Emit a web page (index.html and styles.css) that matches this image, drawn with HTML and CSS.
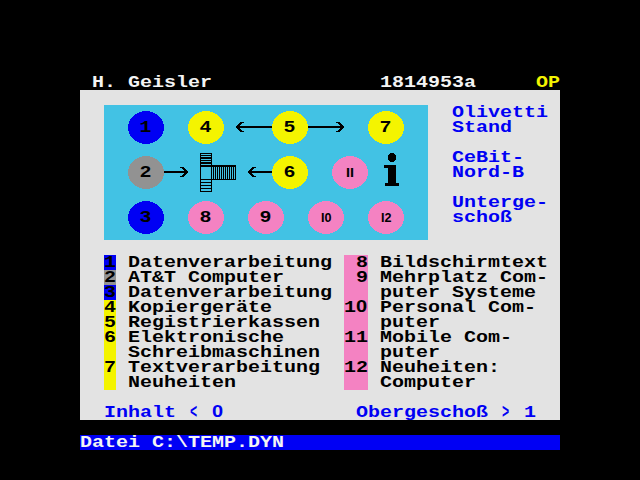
FILE: index.html
```
<!DOCTYPE html>
<html lang="de">
<head>
<meta charset="utf-8">
<title>Olivetti Stand</title>
<link rel="stylesheet" href="styles.css">
</head>
<body>
<div class="screen">
  <header class="top"><pre class="t">H. Geisler</pre><pre class="t code">1814953a</pre><pre class="t op">OP</pre></header>
  <main class="page">
    <section class="upper">
      <svg class="map" width="324" height="135" viewBox="104 105 324 135">
        <g shape-rendering="crispEdges">
          <g fill="#0000f4"><ellipse cx="146" cy="127.5" rx="18" ry="16.5"/><ellipse cx="146" cy="217.5" rx="18" ry="16.5"/></g>
          <ellipse cx="146" cy="172.5" rx="18" ry="16.5" fill="#929292"/>
          <g fill="#f4f400"><ellipse cx="206" cy="127.5" rx="18" ry="16.5"/><ellipse cx="290" cy="127.5" rx="18" ry="16.5"/><ellipse cx="386" cy="127.5" rx="18" ry="16.5"/><ellipse cx="290" cy="172.5" rx="18" ry="16.5"/></g>
          <g fill="#f482c2"><ellipse cx="350" cy="172.5" rx="18" ry="16.5"/><ellipse cx="206" cy="217.5" rx="18" ry="16.5"/><ellipse cx="266" cy="217.5" rx="18" ry="16.5"/><ellipse cx="326" cy="217.5" rx="18" ry="16.5"/><ellipse cx="386" cy="217.5" rx="18" ry="16.5"/></g>
          <path d="M237 126h35v2h-35zM308 126h35v2h-35zM164 171h23v2h-23zM249 171h23v2h-23z"/>
          <g fill="none" stroke="#000" stroke-width="1.8">
            <path d="M244 122.500H241.500L237 127L241.500 131.500H244M336 122.500H338.500L343 127L338.500 131.500H336M180 167.500H182.500L187 172L182.500 176.500H180M256 167.500H253.500L249 172L253.500 176.500H256"/>
          </g>
          <path d="M200 153h12v39h-12zM211 165h25v15h-25z"/>
          <g fill="#42c2e4">
            <path d="M201 154h10v1h-10zM201 156h10v1h-10zM201 159h10v1h-10zM201 161h10v1h-10zM201 164h10v1h-10zM201 167h10v12h-10zM201 180h10v2h-10zM201 183h10v2h-10zM201 186h10v2h-10zM201 189h10v2h-10z"/>
            <path d="M212 167h1v12h-1zM214 167h1v12h-1zM216 167h1v12h-1zM218 167h1v12h-1zM220 167h1v12h-1zM222 167h1v12h-1zM224 167h1v12h-1zM226 167h1v12h-1zM228 167h1v12h-1zM230 167h1v12h-1zM232 167h1v12h-1zM234 167h1v12h-1z"/>
          </g>
          <ellipse cx="392" cy="157.500" rx="4" ry="4.500"/>
          <path d="M384 165h12v18h3v3h-14v-3h3v-15h-4z"/>
        </g>
        <g class="num">
          <text transform="translate(139.500 132) scale(1.176 1)">1</text>
          <text transform="translate(199.500 132) scale(1.176 1)">4</text>
          <text transform="translate(283.500 132) scale(1.176 1)">5</text>
          <text transform="translate(379.500 132) scale(1.176 1)">7</text>
          <text transform="translate(139.500 177) scale(1.176 1)">2</text>
          <text transform="translate(283.500 177) scale(1.176 1)">6</text>
          <text transform="translate(139.500 222) scale(1.176 1)">3</text>
          <text transform="translate(199.500 222) scale(1.176 1)">8</text>
          <text transform="translate(259.500 222) scale(1.176 1)">9</text>
        </g>
        <g class="small">
          <text x="346" y="177" textLength="8" lengthAdjust="spacingAndGlyphs">II</text>
          <text x="321" y="222" textLength="10.500" lengthAdjust="spacingAndGlyphs">I0</text>
          <text x="381" y="222" textLength="10.500" lengthAdjust="spacingAndGlyphs">I2</text>
        </g>
      </svg>
      <pre class="t blue side">Olivetti
Stand

CeBit-
Nord-B

Unterge-
schoß</pre>
    </section>
    <section class="legend">
      <div class="keys left"><pre class="t">1
2
3
4
5
6

7
</pre></div>
      <pre class="t names">Datenverarbeitung
AT&amp;T Computer
Datenverarbeitung
Kopiergeräte
Registrierkassen
Elektronische
Schreibmaschinen
Textverarbeitung
Neuheiten</pre>
      <div class="keys right"><pre class="t"> 8
 9

1<span class="z">0</span>

11

12
</pre></div>
      <pre class="t">Bildschirmtext
Mehrplatz Com-
puter Systeme
Personal Com-
puter
Mobile Com-
puter
Neuheiten:
Computer</pre>
    </section>
    <nav class="links"><pre class="t blue">Inhalt <span class="angle">&lt;</span> <span class="z">0</span></pre><pre class="t blue over">Obergeschoß <span class="angle">&gt;</span> 1</pre></nav>
  </main>
  <footer class="file"><pre class="t">Datei C:\TEMP.DYN</pre></footer>
</div>
</body>
</html>
```
FILE: styles.css
```
body { margin: 0; background: #000; }
.screen { width: 480px; height: 405px; padding: 75px 80px 0; }
.t {
  width: max-content;
  margin: 0;
  font: bold 17px/15px "Liberation Mono", monospace;
  transform: scaleX(1.1763);
  transform-origin: 0 0;
}
.z {
  letter-spacing: 0.75px;
  line-height: 0;
  font-family: "Liberation Sans", sans-serif;
  font-size: 17px;
}
.angle {
  display: inline-block;
  line-height: 15px;
  height: 15px;
  vertical-align: top;
  transform: scale(0.6, 1.2);
}
.top {
  display: grid;
  grid-template-columns: 288px 156px 24px;
  height: 15px;
  padding-left: 12px;
  color: #f4f4f4;
}
.op { color: #f4f400; }
.page { height: 330px; background: #e3e3e3; color: #000; }
.upper {
  display: grid;
  grid-template-columns: 324px 96px;
  column-gap: 24px;
  padding: 15px 0 0 24px;
}
.map { display: block; background: #42c2e4; }
.blue { color: #0000f4; }
.legend {
  display: grid;
  grid-template-columns: 12px 204px 24px 168px;
  column-gap: 12px;
  height: 135px;
  padding: 15px 0 0 24px;
}
.keys { height: 135px; }
.left {
  background: linear-gradient(#0000f4 15px, #929292 15px 30px, #0000f4 30px 45px, #f4f400 45px);
}
.right { background: #f482c2; }
.links {
  display: grid;
  grid-template-columns: 252px 180px;
  height: 15px;
  padding: 15px 0 0 24px;
}
.file {
  height: 15px;
  margin-top: 15px;
  background: #0000f4;
  color: #f4f4f4;
}
.num { font: bold 17px "Liberation Mono", monospace; }
.small { font: bold 13px "Liberation Sans", sans-serif; }
```
